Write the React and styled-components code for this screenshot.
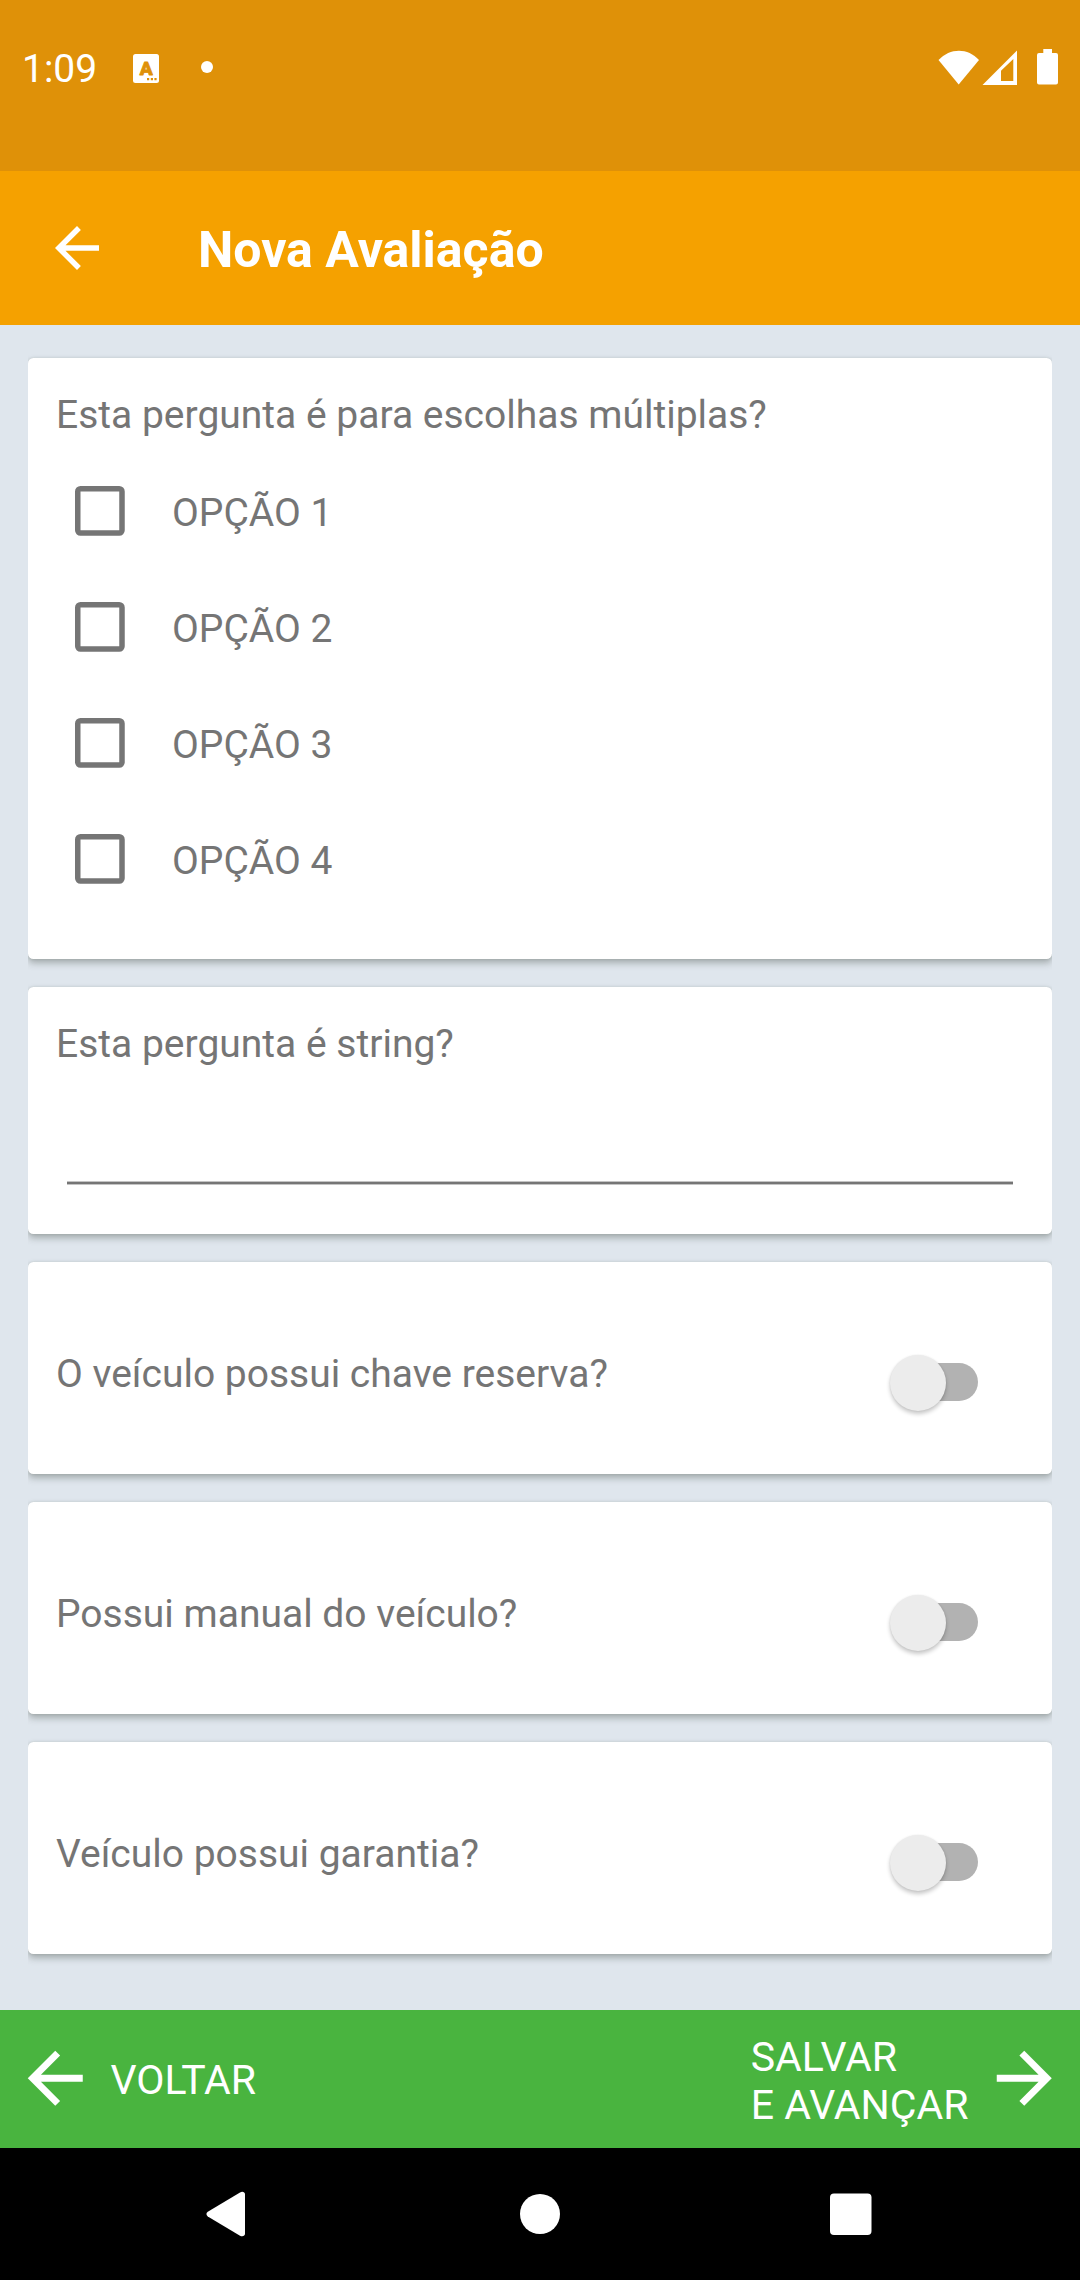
import React, { useState } from "react";
import styled, { createGlobalStyle } from "styled-components";

const GlobalStyle = createGlobalStyle`
  *, *::before, *::after { box-sizing: border-box; }
  body { margin: 0; font-family: Roboto, "Noto Sans", sans-serif; }
`;

const Screen = styled.div`
  width: 1080px;
  height: 2280px;
  display: flex;
  flex-direction: column;
  background: #dfe6ed;
  overflow: hidden;
`;

const StatusBar = styled.header`
  height: 171px;
  flex: none;
  display: flex;
  align-items: flex-start;
  justify-content: space-between;
  padding: 45px 22px 0 22px;
  background: #df9108;
  color: #fff;
`;

const StatusGroup = styled.div`
  display: flex;
  align-items: center;
  height: 46px;
`;

const Clock = styled.span`
  width: 111px;
  padding-top: 2px;
  font-size: 39px;
  line-height: 46px;
`;

const Dot = styled.span`
  width: 12px;
  height: 12px;
  margin: -2px 0 0 42px;
  border-radius: 50%;
  background: #fff;
`;

const Icon = styled.svg`
  display: block;
  flex: none;
  margin-left: ${(p) => p.$gap || 0}px;
  margin-bottom: ${(p) => p.$lift || 0}px;
`;

const IconLabel = styled.text`
  font-family: Roboto, sans-serif;
  font-size: 19px;
  font-weight: 900;
  fill: #df9108;
  stroke: #df9108;
  stroke-width: 0.8px;
  stroke-linejoin: round;
`;

const AppBar = styled.div`
  height: 154px;
  flex: none;
  display: flex;
  align-items: center;
  padding-left: 44px;
  background: #f5a100;
  color: #fff;
`;

const BackButton = styled.button`
  width: 66px;
  height: 66px;
  padding: 0;
  border: 0;
  background: none;
  color: #fff;
`;

const Title = styled.h1`
  margin: 3px 0 0 88px;
  font-size: 50px;
  line-height: 58px;
  font-weight: 700;
`;

const Form = styled.main`
  flex: 1;
  display: flex;
  flex-direction: column;
  margin: 0 28px;
  padding-top: 33px;
  gap: 28px;
  overflow: hidden;
`;

const Card = styled.section`
  flex: none;
  height: ${(p) => p.$height}px;
  padding: 0 28px;
  border-radius: 5.5px;
  background: #fff;
  box-shadow: 0 4px 7px rgba(60, 70, 60, 0.36), 0 0 3px rgba(60, 70, 60, 0.14);
  color: #757575;
`;

const SwitchCard = styled(Card)`
  display: flex;
  align-items: center;
  justify-content: space-between;
  padding: 10px 74px 0 28px;
`;

const Question = styled.p`
  margin: 0;
  padding-top: ${(p) => p.$top || 0}px;
  font-size: 39px;
  line-height: 46px;
`;

const Options = styled.div`
  display: flex;
  flex-direction: column;
  margin-top: 15px;
`;

const Option = styled.label`
  height: 116px;
  display: flex;
  align-items: center;
  gap: 47px;
  padding-left: 19px;
  font-size: 39px;
  line-height: 46px;
`;

const OptionText = styled.span`
  padding-top: 4px;
`;

const TextField = styled.input`
  display: block;
  width: 946px;
  height: 64px;
  margin: 53px 0 0 11px;
  padding: 0;
  border: 0;
  border-bottom: 2px solid #757575;
  border-radius: 0;
  box-shadow: 0 1px 0 #c4c4c4, inset 0 -1px 0 #c4c4c4;
  outline: none;
  background: none;
  font: inherit;
  color: #333;
`;

const Track = styled.button`
  width: 83px;
  height: 38px;
  display: flex;
  align-items: center;
  margin-top: 18px;
  padding: 0;
  border: 0;
  border-radius: 19px;
  background: #b2b2b2;
`;

const Thumb = styled.span`
  flex: none;
  width: 56px;
  height: 56px;
  margin: ${(p) => (p.$on ? "0 -5px 0 32px" : "1px 0 0 -5px")};
  border-radius: 50%;
  background: #ececec;
  box-shadow: 0 3px 4px rgba(0, 0, 0, 0.22), 0 0 2px rgba(0, 0, 0, 0.08);
`;

const Footer = styled.footer`
  height: 138px;
  flex: none;
  display: flex;
  align-items: center;
  justify-content: space-between;
  padding: 0 15px 0 14px;
  background: #49b43f;
`;

const FooterButton = styled.button`
  display: flex;
  align-items: center;
  gap: 14px;
  padding: 0;
  border: 0;
  background: none;
  color: #fff;
  font-family: inherit;
  font-size: 41px;
  line-height: 48px;
  text-align: left;
`;

const FooterLabel = styled.span`
  padding-top: ${(p) => p.$top}px;
`;

const NavBar = styled.nav`
  height: 132px;
  flex: none;
  display: flex;
  align-items: center;
  padding-left: 206px;
  background: #000;
`;

const Arrow = ({ size, flip, lift }) => (
  <Icon $lift={lift} width={size} height={size} viewBox="0 0 24 24" fill="currentColor">
    <path
      d={
        flip
          ? "M12 4l-1.41 1.41L16.17 11H4v2h12.17l-5.58 5.59L12 20l8-8z"
          : "M20 11H7.83l5.59-5.59L12 4l-8 8 8 8 1.41-1.41L7.83 13H20z"
      }
    />
  </Icon>
);

const CheckBox = () => (
  <Icon width="50" height="50" viewBox="0 0 50 50" fill="none">
    <rect x="2.75" y="2.75" width="44.25" height="44.25" rx="2.75" stroke="#757575" strokeWidth="5.5" />
  </Icon>
);

const Toggle = () => {
  const [on, setOn] = useState(false);
  return (
    <Track role="switch" aria-checked={on} onClick={() => setOn(!on)}>
      <Thumb $on={on} />
    </Track>
  );
};

const options = ["OPÇÃO 1", "OPÇÃO 2", "OPÇÃO 3", "OPÇÃO 4"];
const toggles = [
  "O veículo possui chave reserva?",
  "Possui manual do veículo?",
  "Veículo possui garantia?",
];

export default function App() {
  return (
    <Screen>
      <GlobalStyle />
      <StatusBar>
        <StatusGroup>
          <Clock>1:09</Clock>
          <Icon width="26" height="29" viewBox="0 0 26 29">
            <rect width="26" height="29" rx="2.5" fill="#fff" />
            <IconLabel x="13.2" y="20.5" textAnchor="middle">A</IconLabel>
            <path d="M14 24h2.2v2.2H14zM17.8 24h2.2v2.2h-2.2zM21.4 24h2.2v2.2h-2.2z" fill="#df9108" />
          </Icon>
          <Dot />
        </StatusGroup>
        <StatusGroup>
          <Icon width="42" height="36" viewBox="0 0 42 36" fill="#fff">
            <path d="M0.5 10C12 -2.5 30 -2.5 41 10L20.7 34.5z" />
          </Icon>
          <Icon $gap={2} width="35" height="36" viewBox="0 0 35 36" fill="#fff" fillRule="evenodd">
            <path d="M0.500 35L35 0.5V35zM19 20.700V31H31.3V9z" />
          </Icon>
          <Icon $gap={20} $lift={2} width="21" height="36" viewBox="0 0 21 36" fill="#fff">
            <path d="M6.300 0h8.700v4h4a2 2 0 0 1 2 2v27.500a2 2 0 0 1-2 2H2a2 2 0 0 1-2-2V6a2 2 0 0 1 2-2h4.300z" />
          </Icon>
        </StatusGroup>
      </StatusBar>
      <AppBar>
        <BackButton aria-label="Voltar">
          <Arrow size={66} />
        </BackButton>
        <Title>Nova Avaliação</Title>
      </AppBar>
      <Form>
        <Card $height={601}>
          <Question $top={34}>Esta pergunta é para escolhas múltiplas?</Question>
          <Options>
            {options.map((label) => (
              <Option key={label}>
                <CheckBox />
                <OptionText>{label}</OptionText>
              </Option>
            ))}
          </Options>
        </Card>
        <Card $height={247}>
          <Question $top={34}>Esta pergunta é string?</Question>
          <TextField type="text" />
        </Card>
        {toggles.map((label) => (
          <SwitchCard $height={212} key={label}>
            <Question $top={2}>{label}</Question>
            <Toggle />
          </SwitchCard>
        ))}
      </Form>
      <Footer>
        <FooterButton>
          <Arrow size={82.5} lift={2} />
          <FooterLabel $top={1}>VOLTAR</FooterLabel>
        </FooterButton>
        <FooterButton>
          <FooterLabel $top={3}>
            SALVAR
            <br />E AVANÇAR
          </FooterLabel>
          <Arrow size={82.5} flip lift={2} />
        </FooterButton>
      </Footer>
      <NavBar>
        <Icon width="40" height="46" viewBox="0 0 40 46" fill="#fff">
          <path d="M1.800 20.700L34 1.400C36.500 0 39 1 39 3.500V42.500C39 45 36.500 46 34 44.700L1.800 25.400C0 24 0 22 1.800 20.700z" />
        </Icon>
        <Icon $gap={274} width="40" height="40" viewBox="0 0 40 40" fill="#fff">
          <circle cx="20" cy="20" r="20" />
        </Icon>
        <Icon $gap={270} width="42" height="42" viewBox="0 0 42 42" fill="#fff">
          <rect y="0.500" width="41.500" height="41.500" rx="4" />
        </Icon>
      </NavBar>
    </Screen>
  );
}
